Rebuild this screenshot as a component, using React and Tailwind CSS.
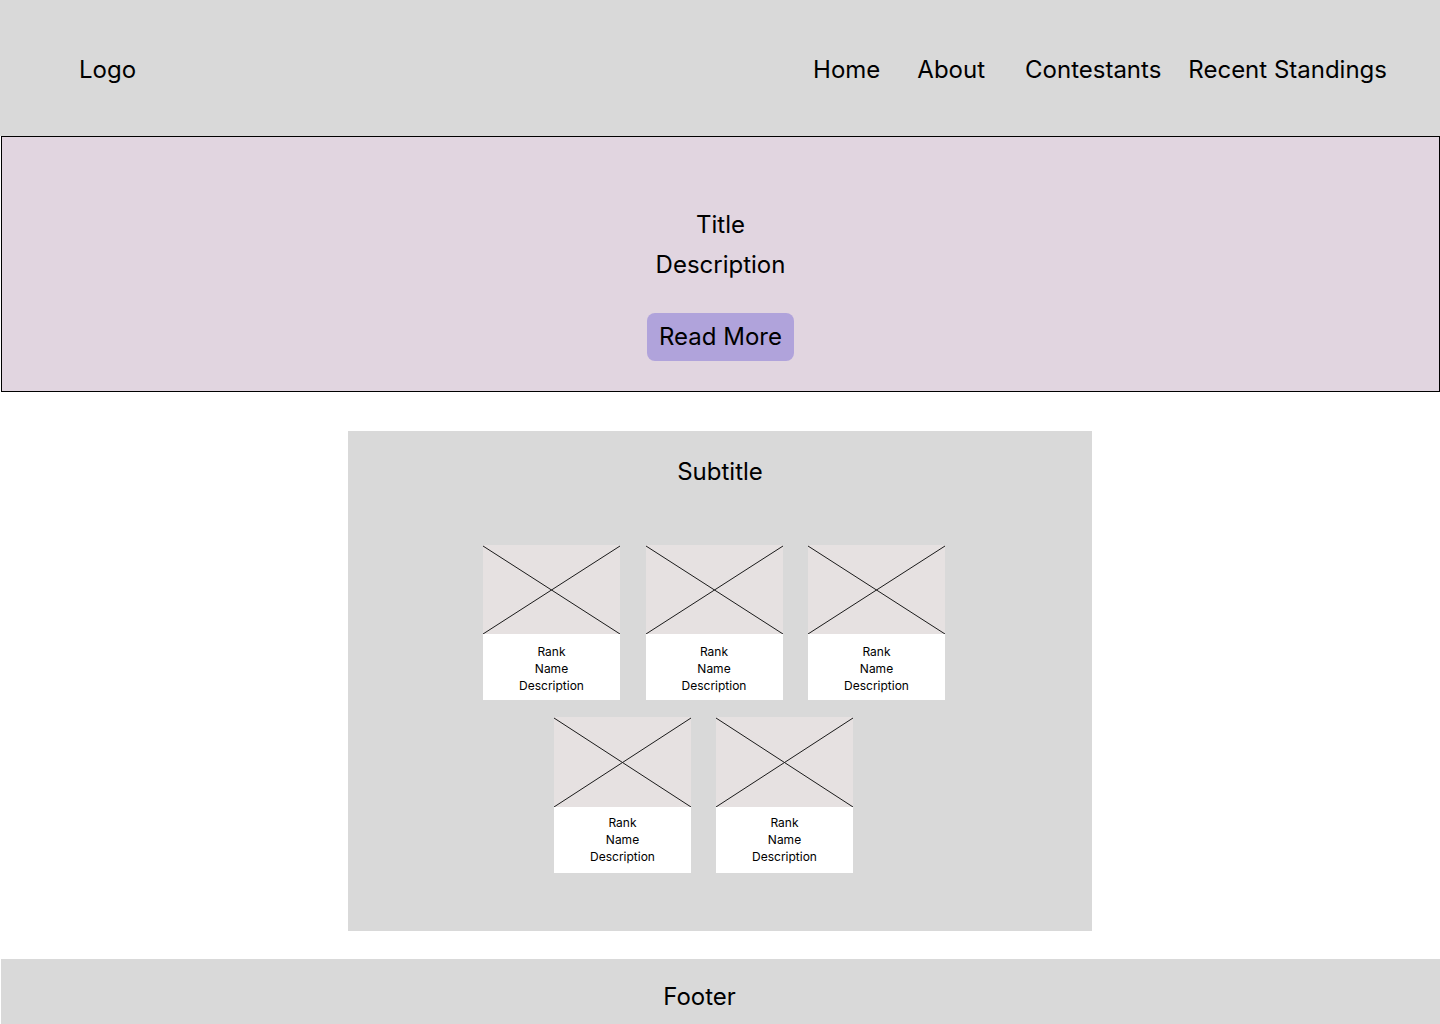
import React from 'react';

const navItems = [
  { label: "Home", cls: "mr-[37px]" },
  { label: "About", cls: "mr-[40px]" },
  { label: "Contestants", cls: "mr-[27px]" },
  { label: "Recent Standings", cls: "" },
];

const rows = [
  { cls: "pl-[135px] gap-[25.5px]", imgH: "h-[89px]", textPad: "pt-[9px]", cards: [1, 2, 3] },
  { cls: "pl-[206px] gap-[25px] mt-[17px]", imgH: "h-[90px]", textPad: "pt-[7px]", cards: [4, 5] },
];

const Placeholder = ({ h }) => (
  <svg className={`block w-[137px] ${h} bg-[#e6e1e1]`} viewBox="0 0 137 89" preserveAspectRatio="none">
    <line x1="0" y1="1" x2="137" y2="89" stroke="#1a1a1a" strokeWidth="1" vectorEffect="non-scaling-stroke" />
    <line x1="0" y1="89" x2="137" y2="1" stroke="#1a1a1a" strokeWidth="1" vectorEffect="non-scaling-stroke" />
  </svg>
);

const ContestantCard = ({ imgH, textPad }) => (
  <div className="w-[137px] bg-white">
    <Placeholder h={imgH} />
    <div className={`h-[66px] ${textPad} text-center text-[12px] leading-[17px] text-black`}>
      <div>Rank</div>
      <div>Name</div>
      <div>Description</div>
    </div>
  </div>
);

export default function App() {
  return (
    <div className="min-h-[1024px] bg-white font-['Inter','Noto_Sans',sans-serif] text-black">
      {/* Header */}
      <header className="h-[136px] bg-[#d9d9d9] flex items-center pt-[3px] pl-[79px] pr-[53px] text-[24px]">
        <div className="flex-1">Logo</div>
        <nav className="flex items-center">
          {navItems.map((item) => (
            <a key={item.label} className={item.cls}>{item.label}</a>
          ))}
        </nav>
      </header>

      {/* Hero */}
      <section className="ml-px w-[1439px] h-[256px] border border-black bg-[#e1d5e0] flex flex-col items-center pt-[68px] text-[24px] leading-[40px]">
        <div>Title</div>
        <div>Description</div>
        <button className="mt-[28px] h-[48px] w-[147px] rounded-[8px] bg-[#b0a3db] text-[24px]">
          Read More
        </button>
      </section>

      {/* Contestants */}
      <section className="mt-[39px] ml-[348px] w-[744px] h-[500px] bg-[#d9d9d9] pt-[21px]">
        <h2 className="text-center text-[24px] leading-[40px]">Subtitle</h2>
        <div className="mt-[53px]">
          {rows.map((row, i) => (
            <div key={i} className={`flex ${row.cls}`}>
              {row.cards.map((c) => (
                <ContestantCard key={c} imgH={row.imgH} textPad={row.textPad} />
              ))}
            </div>
          ))}
        </div>
      </section>

      {/* Footer */}
      <footer className="mt-[28px] ml-px w-[1439px] h-[65px] bg-[#d9d9d9] flex justify-center pt-[18px] pr-[42px] text-[24px] leading-[40px]">
        Footer
      </footer>
    </div>
  );
}
